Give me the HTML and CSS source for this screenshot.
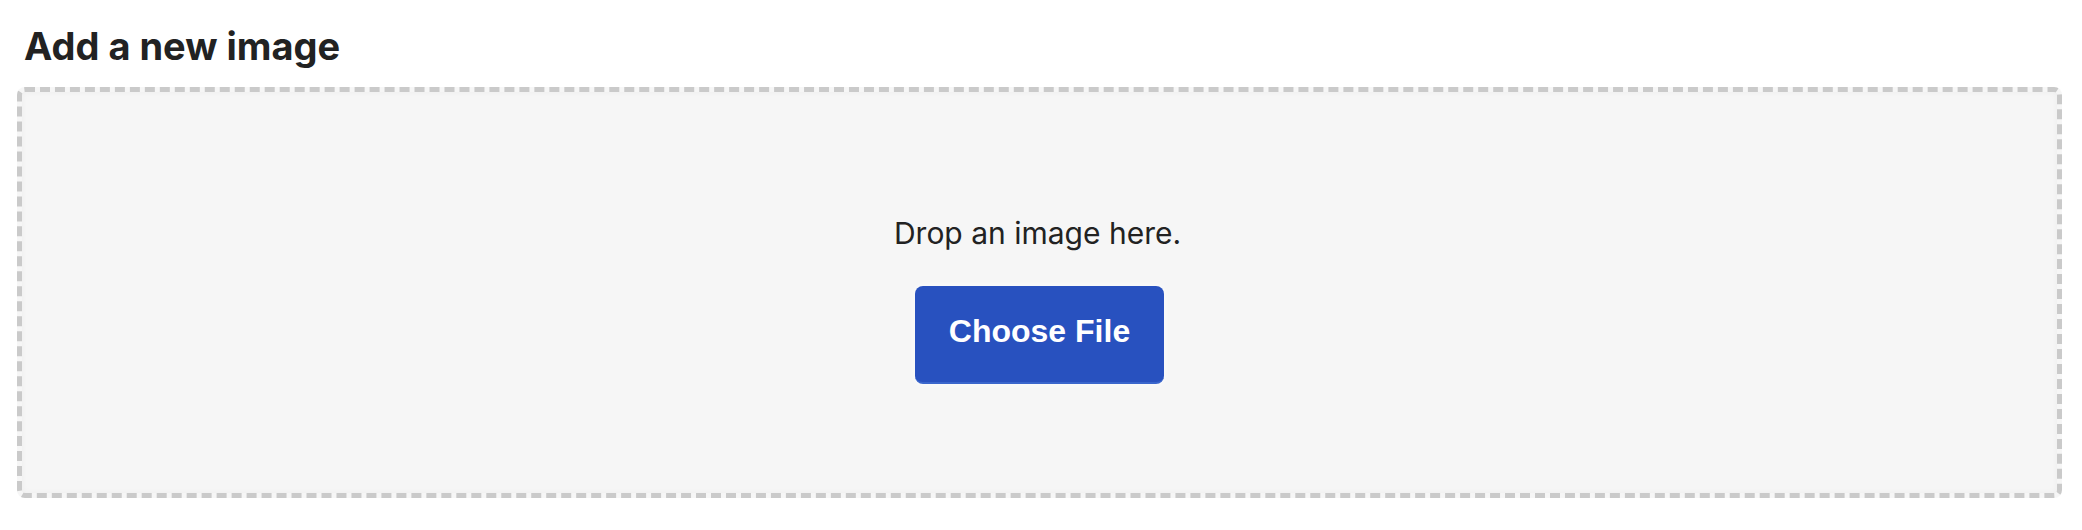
FILE: index.html
```html
<!DOCTYPE html>
<html lang="en">
<head>
	<meta charset="UTF-8">
	<title>Add a new image</title>
	<link rel="stylesheet" href="styles.css">
</head>
<body>
	<div class="uploader">
		<h2 class="title">Add a new image</h2>
		<div class="dropzone" id="drop">
			<p class="hint">Drop an image here.</p>
			<label class="choose">
				Choose File
				<input type="file" accept="image/*" id="file">
			</label>
		</div>
	</div>
</body>
</html>
```

FILE: styles.css
```css
*{
	margin: 0;
	padding: 0;
	box-sizing: border-box;
}
body{
	background: #fff;
	font-family: Inter, "Noto Sans", sans-serif;
	color: #222;
}
.uploader{
	padding: 23px 20px 0 17px;
}
.uploader .title{
	font-size: 38px;
	font-weight: 700;
	line-height: 46px;
	margin-left: 7px;
	margin-bottom: 18px;
	color: #222;
}
.uploader .dropzone{
	height: 411px;
	border: 5px dashed #cacaca;
	border-radius: 8px;
	background-color: #f6f6f6;
	box-shadow: inset 0 0 6px rgba(0,0,0,.04);
	padding-top: 123px;
	display: flex;
	flex-direction: column;
	align-items: center;
}
.uploader .hint{
	font-size: 30px;
	line-height: 36px;
	margin-bottom: 35px;
	margin-right: 4px;
	color: #222;
}
.uploader .choose{
	display: block;
	font-family: "Liberation Sans", Arial, sans-serif;
	font-size: 32px;
	font-weight: bold;
	line-height: 37px;
	color: #fff;
	background-color: #2851bf;
	border-bottom: 2px solid #3a66cc;
	border-radius: 8px;
	padding: 27px 34px 32px;
	box-shadow: 0 0 6px rgba(255,255,255,.9);
	cursor: pointer;
}
.uploader .choose input{
	display: none;
}
```
